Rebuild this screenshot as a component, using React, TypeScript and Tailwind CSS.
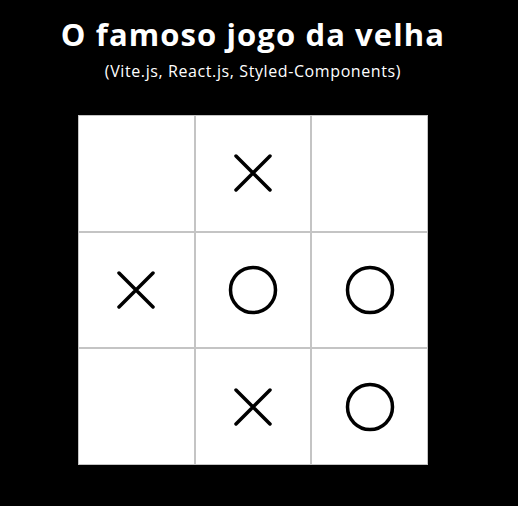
import React from 'react';

type Mark = 'X' | 'O' | '';

const board: Mark[] = ['', 'X', '', 'X', 'O', 'O', '', 'X', 'O'];

const XMark = () => (
  <svg width="38" height="38" viewBox="0 0 38 38" fill="none">
    <path d="M2 2 36 36 M36 2 2 36" stroke="#000" strokeWidth="3.5" strokeLinecap="round" />
  </svg>
);

const OMark = () => (
  <svg width="50" height="50" viewBox="0 0 50 50" fill="none">
    <circle cx="25" cy="25" r="22.5" stroke="#000" strokeWidth="3.5" />
  </svg>
);

export default function App() {
  return (
    <div className="min-h-screen w-full bg-black" style={{ fontFamily: '"Open Sans", Inter, sans-serif' }}>
      <div className="w-[506px] flex flex-col items-center pt-[14px]">
        {/* Title */}
        <h1 className="text-[31px] leading-[40px] font-bold text-white tracking-[1.1px]">O famoso jogo da velha</h1>
        <p className="text-[16px] leading-[24px] font-normal text-white mt-[5px] tracking-[0.6px]">(Vite.js, React.js, Styled-Components)</p>

        {/* Board */}
        <div className="mt-[32px] grid grid-cols-3 grid-rows-3 w-[350px] h-[350px] bg-white">
          {board.map((cell, i) => (
            <div key={i} className="border border-[#c4c4c4] flex items-center justify-center">
              {cell === 'X' && <XMark />}
              {cell === 'O' && <OMark />}
            </div>
          ))}
        </div>
      </div>
    </div>
  );
}
